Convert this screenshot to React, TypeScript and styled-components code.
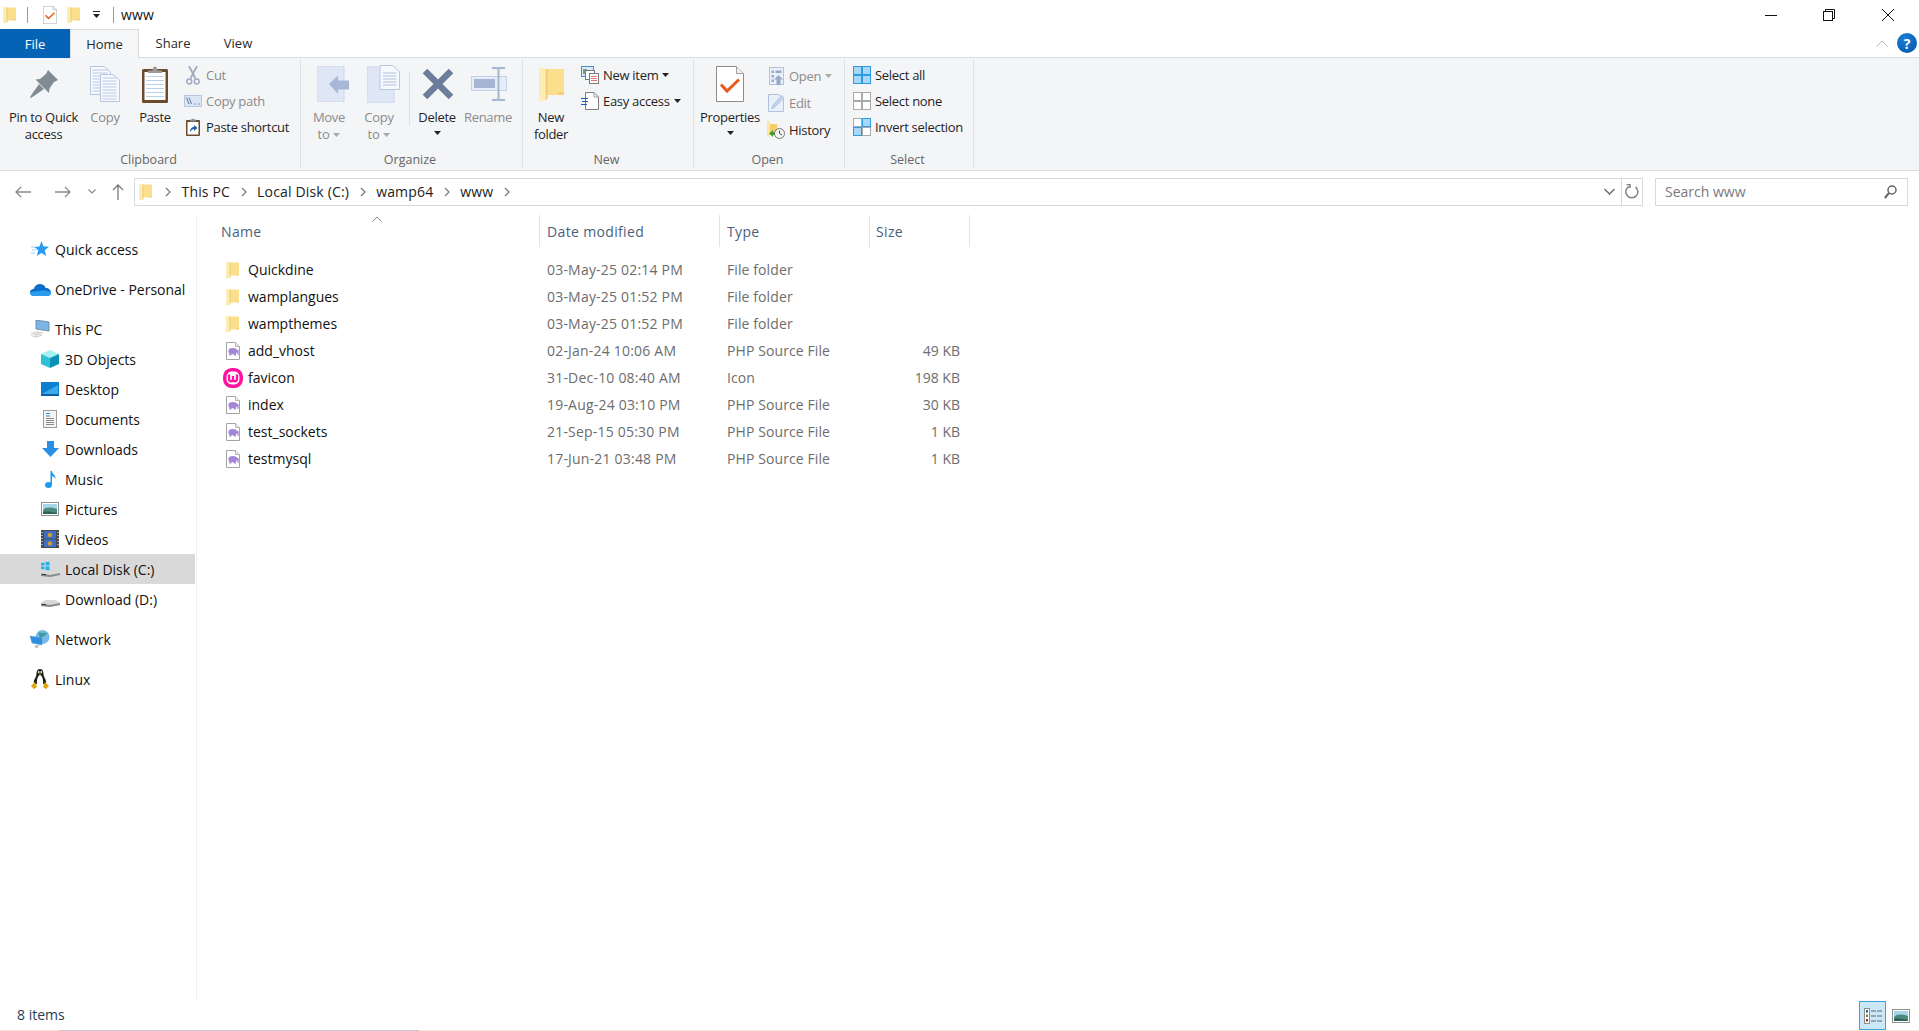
import React from "react";
import styled, { createGlobalStyle } from "styled-components";

const GlobalStyle = createGlobalStyle`
  html, body {
    margin: 0;
    padding: 0;
    height: 100%;
    background: #fff;
    overflow: hidden;
    font-family: "Open Sans", "Noto Sans", "Liberation Sans", sans-serif;
    font-size: 14px;
    color: #111;
  }
  #root { height: 100%; }
  svg { display: block; flex-shrink: 0; }
`;

/* ---------- drawings ---------- */

function FolderIcon({ w = 13, h = 18 }: { w?: number; h?: number }) {
  return (
    <svg width={w} height={h} viewBox="0 0 13 18" preserveAspectRatio="none">
      <path d="M3 1.5H13V13H9.5V14.5H3Z" fill="#fbdf8d" />
      <path d="M0 .5L3.5 1.5V17L.6 17.8L0 16.5Z" fill="#fdedb4" />
      <path d="M3.5 1.5H4.5V16.4L3.5 17Z" fill="#f0cd74" />
      <path d="M4.500 14.500H9.500V13H13V14.500H4.500Z" fill="#f5d27a" />
    </svg>
  );
}

function Elephant({ x, y }: { x: number; y: number }) {
  return (
    <g transform={`translate(${x} ${y}) scale(1.15)`} fill="#a586d6">
      <ellipse cx="4.5" cy="2.8" rx="3.8" ry="2.7" />
      <rect x="1.5" y="3.5" width="1.8" height="3" />
      <rect x="5.4" y="3.5" width="1.8" height="3" />
      <path d="M7 1L9.6 2V5.8H8.4V3.4L6.6 3Z" />
    </g>
  );
}

function PhpIcon() {
  return (
    <svg width="14" height="18" viewBox="0 0 14 18">
      <path d="M.5.5H9.5L13.5 4.5V17.5H.5Z" fill="#fff" stroke="#a3a3a3" />
      <path d="M9.5.5V4.5H13.5" fill="#eee" stroke="#b5b5b5" />
      <Elephant x={1.6} y={6} />
    </svg>
  );
}

function WampIcon() {
  return (
    <svg width="20" height="20" viewBox="0 0 20 20">
      <rect x="1.8" y="1.8" width="16.4" height="16.4" rx="6.8" fill="#fff" stroke="#ff12a0" strokeWidth="3.5" />
      <path d="M6 6.500V10.500C6 12.500 7 13.300 8 13.300C9.200 13.300 10 12.300 10 11V8M10 11C10 12.300 10.800 13.300 12 13.300C13 13.300 14 12.500 14 10.500V6.500" fill="none" stroke="#ff12a0" strokeWidth="2.3" />
    </svg>
  );
}

function PropertiesIcon({ w = 28, h = 36 }: { w?: number; h?: number }) {
  return (
    <svg width={w} height={h} viewBox="0 0 28 36">
      <path d="M.5.5H20.5L27.5 7.5V35.5H.5Z" fill="#fff" stroke="#8d8d8d" />
      <path d="M20.5.5V7.5H27.5" fill="#f1f1f1" stroke="#9e9e9e" />
      <path d="M5 18.5L11 25L23 13.5" fill="none" stroke="#ea5a1c" strokeWidth="3" />
    </svg>
  );
}

function PinIcon() {
  return (
    <svg width="30" height="30" viewBox="0 0 30 30">
      <path d="M19 1L29 11L25 13L20.5 19.5L20 24L6.5 10.5L11 10L17 5Z" fill="#808c93" />
      <path d="M10 15L15 20L2 29L1 28Z" fill="#808c93" />
    </svg>
  );
}

function DocLines({ x, y, w, h }: { x: number; y: number; w: number; h: number }) {
  const lines = [];
  for (let ly = y + 4; ly < y + h - 1; ly += 3) lines.push(`M${x + 2.5} ${ly}H${x + w - 2.5}`);
  return (
    <g>
      <path d={`M${x}.5 ${y}.5H${x + w - 6}L${x + w}.5 ${y + 6}V${y + h}.5H${x}.5Z`} fill="#f6f9fe" stroke="#b6c6e0" />
      <path d={lines.join("")} stroke="#b9c9e2" fill="none" />
    </g>
  );
}

function CopyIcon() {
  return (
    <svg width="30" height="36" viewBox="0 0 30 36">
      <DocLines x={0} y={0} w={20} h={28} />
      <DocLines x={10} y={8} w={19} h={27} />
    </svg>
  );
}

function ClipboardIcon() {
  return (
    <svg width="26" height="37" viewBox="0 0 26 37">
      <rect x="0" y="3" width="26" height="34" rx="1.5" fill="#6c4a2c" />
      <rect x="2.5" y="6" width="21" height="28" fill="#fff" />
      <path d="M4 10.5H22M4 14.5H22M4 18.5H22M4 22.5H22M4 26.5H22M4 30.5H22" stroke="#b6d3ee" />
      <path d="M6 7V4.5H10.5C11 2 11.5 .5 13 .5C14.5 .5 15 2 15.5 4.5H20V7Z" fill="#9a9a9a" />
    </svg>
  );
}

function CutIcon() {
  return (
    <svg width="14" height="19" viewBox="0 0 14 19" fill="none" stroke="#9facc2">
      <path d="M3 0L9.5 12.5M11 0L4.5 12.5" strokeWidth="1.8" />
      <circle cx="3.2" cy="15.5" r="2.5" strokeWidth="1.5" />
      <circle cx="10.8" cy="15.5" r="2.5" strokeWidth="1.5" />
    </svg>
  );
}

function CopyPathIcon() {
  return (
    <svg width="18" height="12" viewBox="0 0 18 12">
      <rect x=".5" y=".5" width="17" height="11" fill="#dbe5f6" stroke="#b6c7e2" />
      <path d="M2.5 2.5L5 9M5 2.5L7.5 9" stroke="#65748f" fill="none" />
      <path d="M10 9H11M12.5 9H13.5M15 9H16" stroke="#65748f" />
    </svg>
  );
}

function PasteShortcutIcon() {
  return (
    <svg width="14" height="18" viewBox="0 0 14 18">
      <rect y="2" width="14" height="16" rx="1" fill="#6c4a2c" />
      <rect x="1.5" y="4" width="11" height="12.5" fill="#fff" />
      <path d="M4 3.5V1.5H6C6.2 .5 7.8 .5 8 1.5H10V3.5Z" fill="#888" />
      <path d="M4 14C4 10.5 6 9 8 9V7L11.5 10L8 13V11C6.5 11 5.5 12 4 14Z" fill="#1f5fa8" />
    </svg>
  );
}

function MoveToIcon() {
  return (
    <svg width="33" height="36" viewBox="0 0 33 36">
      <path d="M0 0H27V36H0Z" fill="#dfe7f6" stroke="#c9d7ee" />
      <path d="M12 18L21 9.5V14.5H32V23.5H21V28Z" fill="#a6b8d6" />
    </svg>
  );
}

function CopyToIcon() {
  return (
    <svg width="33" height="38" viewBox="0 0 33 38">
      <path d="M0 2H27V38H0Z" fill="#dfe7f6" stroke="#c9d7ee" />
      <path d="M13 .5H26L32.5 7V24.5H13Z" fill="#f6f9fe" stroke="#b6c6e0" />
      <path d="M16 8H29.5M16 11H29.5M16 14H29.5M16 17H29.5M16 20H29.5" stroke="#aebfd9" />
    </svg>
  );
}

function DeleteIcon() {
  return (
    <svg width="32" height="32" viewBox="0 0 32 32">
      <path d="M3 3L29 29M29 3L3 29" stroke="#6c7d9c" strokeWidth="6.5" />
    </svg>
  );
}

function RenameIcon() {
  return (
    <svg width="36" height="34" viewBox="0 0 36 34">
      <rect x=".5" y="9.5" width="35" height="14" fill="#e6edf9" stroke="#c2d1e9" />
      <rect x="3" y="12" width="21" height="9" fill="#a5b6d3" />
      <path d="M21 1H26.5C27 1 27.5 2 27.5 3V31C27.5 32 27 33 26.5 33H21M34 1H28.5C28 1 27.5 2 27.5 3V31C27.5 32 28 33 28.5 33H34" fill="none" stroke="#a5b6d3" strokeWidth="2" />
    </svg>
  );
}

function NewItemIcon() {
  return (
    <svg width="18" height="18" viewBox="0 0 18 18">
      <rect x=".5" y=".5" width="12" height="10" fill="#dcebfa" stroke="#4d8cc9" />
      <rect x="2" y="3" width="4" height="5" fill="#7aa07a" />
      <rect x="4.5" y="4.5" width="9" height="9" fill="#fff" stroke="#7a7a7a" />
      <rect x="8.5" y="7.5" width="9" height="10" fill="#fff" stroke="#7a7a7a" />
      <path d="M10 10.5H16M10 12.5H16M10 14.5H16" stroke="#d77" />
    </svg>
  );
}

function EasyAccessIcon() {
  return (
    <svg width="18" height="18" viewBox="0 0 18 18">
      <path d="M4.5.5H13L17.5 5V17.5H4.5Z" fill="#fff" stroke="#7d7d7d" />
      <path d="M13 .5V5H17.5" fill="none" stroke="#a0a0a0" />
      <path d="M0 6.5H7M1 9.5H7M0 12.5H6" stroke="#1f5fa8" />
    </svg>
  );
}

function OpenIcon() {
  return (
    <svg width="15" height="18" viewBox="0 0 15 18">
      <rect x=".5" y=".5" width="14" height="17" fill="#eaf0fa" stroke="#b2c2dc" />
      <path d="M2.5 3.5H5V6H2.5ZM6.5 3.5H12.5V6H6.5ZM2.5 8H5V10.5H2.5ZM2.5 12.5H5V15H2.5Z" fill="#96a9c8" />
      <path d="M9.5 8L14 12.5H11.5V18H7.5V12.5H5Z" fill="#96a9c8" />
    </svg>
  );
}

function EditIcon() {
  return (
    <svg width="17" height="18" viewBox="0 0 17 18">
      <path d="M.5.5H11L15.5 5V17.5H.5Z" fill="#eaf0fa" stroke="#b2c2dc" />
      <path d="M3.5 15L5 11L13.5 1.5L16 3.5L7 13Z" fill="#c4d4ec" stroke="#a5b8d6" strokeWidth=".7" />
    </svg>
  );
}

function HistoryIcon() {
  return (
    <svg width="18" height="18" viewBox="0 0 18 18">
      <path d="M0 0L3 1V3H10V14H3L.5 16Z" fill="#f4cd6a" />
      <path d="M0 0L3 1V14L.5 16Z" fill="#fde7a2" />
      <path d="M2 12.5L6 9V11H9V14H6V16Z" fill="#35a32a" />
      <circle cx="12.5" cy="12.5" r="5" fill="#f4f4f4" stroke="#777" />
      <path d="M12.5 9.5V12.5L15 14" stroke="#555" fill="none" />
    </svg>
  );
}

function SelectIcon({ filled }: { filled: number[] }) {
  const cells = [
    [0, 0],
    [9, 0],
    [0, 9],
    [9, 9],
  ];
  return (
    <svg width="18" height="18" viewBox="0 0 18 18">
      {cells.map(([x, y], i) => {
        const on = filled.includes(i);
        return (
          <rect
            key={i}
            x={x + 0.5}
            y={y + 0.5}
            width="8"
            height="8"
            fill={on ? "#a8d8f8" : "#fff"}
            stroke={on ? "#2f9be3" : "#a9a9a9"}
          />
        );
      })}
    </svg>
  );
}

function Caret({ light }: { light?: boolean }) {
  return (
    <svg width="7" height="4" viewBox="0 0 7 4">
      <path d="M0 0H7L3.5 4Z" fill={light ? "#a9a9a9" : "#222"} />
    </svg>
  );
}

function Chevron() {
  return (
    <svg width="6" height="10" viewBox="0 0 6 10">
      <path d="M1 1L5 5L1 9" fill="none" stroke="#777" strokeWidth="1.2" />
    </svg>
  );
}

function StarIcon() {
  return (
    <svg width="18" height="16" viewBox="0 0 18 16">
      <path d="M10.5 0L12.5 5.3L18 5.8L13.8 9.3L15.2 15L10.5 12L5.8 15L7.2 9.3L3.5 6L8.5 5.5Z" fill="#2a9bee" />
      <path d="M0 6H4M1 9H5M0 12H4" stroke="#9cd0f5" />
    </svg>
  );
}

function CloudIcon() {
  return (
    <svg width="21" height="13" viewBox="0 0 20 13" preserveAspectRatio="none">
      <path d="M4 13C1 13 0 11 0 9.5C0 7.5 1.5 6 3.5 6C4.5 2.5 7 1 9.5 1C12 1 14 2.5 15 5C17.5 5 20 7 20 9.5C20 11.5 18.5 13 16.5 13Z" fill="#0a6fc9" />
      <path d="M0 9.5C0 11 1 13 4 13H16.5C18.5 13 20 11.5 20 9.5C17 7.5 13 7 9 8C5 8.5 2 8.5 0 9.5Z" fill="#2c9cef" />
    </svg>
  );
}

function MonitorIcon() {
  return (
    <svg width="20" height="18" viewBox="0 0 20 18">
      <path d="M6 0L19 2V11L6 9Z" fill="#7cb6e6" stroke="#5a7f9c" strokeWidth=".8" />
      <path d="M0 13L8 11L14 13L6 16Z" fill="#dcdcdc" />
      <path d="M1 15.5L6 17L12 15" stroke="#c9c9c9" fill="none" />
    </svg>
  );
}

function CubeIcon() {
  return (
    <svg width="18" height="18" viewBox="0 0 18 18">
      <path d="M9 0L18 4L9 8L0 4Z" fill="#a6f0ef" />
      <path d="M0 4L9 8V18L0 14Z" fill="#2cc1d6" />
      <path d="M18 4L9 8V18L18 14Z" fill="#0b91b6" />
    </svg>
  );
}

function DesktopIcon() {
  return (
    <svg width="18" height="14" viewBox="0 0 18 14">
      <rect width="18" height="14" fill="#0b7fd0" />
      <path d="M1 12L17 3V12Z" fill="#3ea8ec" />
      <rect x="0" y="12" width="18" height="2" fill="#0a5fa6" />
    </svg>
  );
}

function DocumentsIcon() {
  return (
    <svg width="14" height="18" viewBox="0 0 14 18">
      <rect x=".5" y=".5" width="13" height="17" fill="#f4f4f4" stroke="#9d9d9d" />
      <path d="M3 3.5H7M3 6H7" stroke="#2c86d0" />
      <path d="M3 8.5H11M3 10.5H11M3 12.5H11M3 14.5H11" stroke="#8b8b8b" />
    </svg>
  );
}

function DownloadsIcon() {
  return (
    <svg width="17" height="16" viewBox="0 0 17 16">
      <path d="M5 0H12V7H17L8.5 16L0 7H5Z" fill="#2b8fe6" />
    </svg>
  );
}

function MusicIcon() {
  return (
    <svg width="11" height="17" viewBox="0 0 11 17">
      <ellipse cx="3.5" cy="14" rx="3.5" ry="3" fill="#1d9bf0" />
      <path d="M5.5 0H7C7.2 3 11 4 10.5 8C9.5 6 8.5 5.5 7 5.5V14H5.5Z" fill="#1d9bf0" />
    </svg>
  );
}

function PicturesIcon() {
  return (
    <svg width="18" height="14" viewBox="0 0 18 14">
      <rect x=".5" y=".5" width="17" height="13" fill="#fff" stroke="#8f8f8f" />
      <rect x="2" y="2" width="14" height="10" fill="#a8d4ea" />
      <path d="M2 8C5 5 9 5 16 7V12H2Z" fill="#4c8a7c" />
      <path d="M2 10C6 9 10 10 16 11V12H2Z" fill="#2e5f5a" />
    </svg>
  );
}

function VideosIcon() {
  return (
    <svg width="18" height="18" viewBox="0 0 18 18">
      <rect width="18" height="18" fill="#4a4a4a" />
      <path d="M1 2V3M1 5V6M1 8V9M1 11V12M1 14V15M17 2V3M17 5V6M17 8V9M17 11V12M17 14V15" stroke="#ddd" strokeWidth="1.2" />
      <rect x="3" y="1" width="12" height="7.5" fill="#3f6fc4" />
      <rect x="3" y="9.5" width="12" height="7.5" fill="#3f6fc4" />
      <circle cx="9" cy="5" r="2.2" fill="#d69a2a" />
      <circle cx="9" cy="13.5" r="2.2" fill="#d69a2a" />
    </svg>
  );
}

function DiskIcon({ windows }: { windows?: boolean }) {
  return (
    <svg width="19" height="16" viewBox="0 0 19 16">
      <path d="M0 12L4 9H15L19 12V14L9 16L0 15Z" fill="#d8d8d8" />
      <path d="M0 12.5L9 14L19 12V14L9 16L0 15Z" fill="#8a8a8a" />
      <path d="M1 13.5H5" stroke="#333" />
      {windows && <path d="M0 2L3.5 1.5V4.5H0ZM4.5 1.3L8.5 .5V4.5H4.5ZM0 5.5H3.5V8.5L0 8ZM4.5 5.5H8.5V9.5L4.5 8.7Z" fill="#22b0ee" />}
    </svg>
  );
}

function NetworkIcon() {
  return (
    <svg width="20" height="18" viewBox="0 0 20 18">
      <circle cx="12.5" cy="7" r="7" fill="#79b9e6" />
      <path d="M9 2C12 4 15 2 17 3C16 6 13 5 12 8C10 8 8 5 9 2Z" fill="#3f9a9a" />
      <path d="M0 6L12 8V15L2 13Z" fill="#2e8fdc" stroke="#5a9ecf" strokeWidth=".5" />
      <path d="M5 15H9L8 18H5Z" fill="#c4c4c4" />
    </svg>
  );
}

function TuxIcon() {
  return (
    <svg width="18" height="21" viewBox="0 0 18 21">
      <path d="M9 0C12 0 12.5 3 12.5 5C12.5 8 16 11 15 15H3C2 11 5.5 8 5.5 5C5.5 3 6 0 9 0Z" fill="#1d1d1d" />
      <path d="M9 6C11.5 7 12.5 11 12 15.5H6C5.5 11 6.5 7 9 6Z" fill="#fff" />
      <circle cx="7.7" cy="3" r=".9" fill="#fff" />
      <circle cx="10.3" cy="3" r=".9" fill="#fff" />
      <path d="M7.5 4.5H10.5L9 6Z" fill="#e0a30e" />
      <path d="M0 17L4 13L6 18L3 20ZM18 17L14 13L12 18L15 20Z" fill="#e0a30e" />
    </svg>
  );
}

function DetailsViewIcon() {
  return (
    <svg width="18" height="16" viewBox="0 0 18 16">
      <rect x=".5" y=".5" width="5" height="15" fill="#fff" stroke="#8f8f8f" />
      <rect x="2" y="2" width="2" height="2.5" fill="#35608f" />
      <rect x="2" y="6.5" width="2" height="2.5" fill="#9a7b22" />
      <rect x="2" y="11" width="2" height="2.5" fill="#a8321e" />
      <path d="M7 3H12M13 3H18M7 8H12M13 8H18M7 13H12M13 13H18" stroke="#666" />
    </svg>
  );
}

/* ---------- window chrome ---------- */

const Page = styled.div`
  height: 100vh;
  display: flex;
  flex-direction: column;
  overflow: hidden;
`;

const Spacer = styled.div<{ $w: number }>`
  width: ${(p) => p.$w}px;
  flex-shrink: 0;
`;

const TitleBar = styled.div`
  height: 29px;
  display: flex;
  align-items: center;
  padding-left: 3px;
`;

const TitleSep = styled.div<{ $right: number }>`
  width: 1px;
  height: 16px;
  background: #9a9a9a;
  margin: 0 ${(p) => p.$right}px 0 11px;
`;

const QuickDown = styled.div`
  width: 9px;
  margin: 0 1px 0 12px;
  display: flex;
  flex-direction: column;
  align-items: center;
  gap: 2px;
  &::before {
    content: "";
    width: 7px;
    height: 1px;
    background: #222;
  }
`;

const TitleText = styled.span`
  font-size: 14px;
  letter-spacing: 0.2px;
  color: #111;
`;

const WindowButtons = styled.div`
  margin-left: auto;
  display: flex;
  align-items: center;
  gap: 46px;
  padding-right: 25px;
`;

const MaxButton = styled.div`
  margin-right: 1px;
`;

const TabRow = styled.div`
  height: 29px;
  box-sizing: border-box;
  display: flex;
  align-items: stretch;
  border-bottom: 1px solid #dadbdc;
`;

const FileTab = styled.div`
  width: 70px;
  margin-bottom: -1px;
  background: #0563b5;
  color: #fff;
  font-size: 13px;
  display: flex;
  align-items: center;
  justify-content: center;
`;

const Tab = styled.div<{ $w: number; $active?: boolean }>`
  width: ${(p) => p.$w}px;
  box-sizing: border-box;
  font-size: 13px;
  color: #2b2b2b;
  display: flex;
  align-items: center;
  justify-content: center;
  margin-bottom: ${(p) => (p.$active ? "-1px" : "0")};
  background: ${(p) => (p.$active ? "#f5f6f7" : "transparent")};
  border: ${(p) => (p.$active ? "1px solid #dadbdc" : "none")};
  border-bottom: none;
`;

const TabRight = styled.div`
  margin-left: auto;
  display: flex;
  align-items: center;
  gap: 9px;
  padding-right: 2px;
`;

const HelpBall = styled.div`
  width: 20px;
  height: 20px;
  border-radius: 50%;
  background: radial-gradient(circle at 40% 30%, #1b7fd8, #0054a6);
  color: #fff;
  font-size: 14px;
  font-weight: 700;
  display: flex;
  align-items: center;
  justify-content: center;
`;

/* ---------- ribbon ---------- */

const Ribbon = styled.div`
  height: 113px;
  box-sizing: border-box;
  display: flex;
  padding: 2px 0;
  background: #f4f5f7;
  border-bottom: 1px solid #dadbdc;
`;

const Group = styled.div<{ $w: number; $pad: number }>`
  width: ${(p) => p.$w}px;
  box-sizing: border-box;
  display: flex;
  flex-direction: column;
  border-right: 1px solid #dfe0e2;
  padding-left: ${(p) => p.$pad}px;
`;

const GroupBody = styled.div`
  flex: 1;
  display: flex;
  align-items: flex-start;
  padding-top: 2px;
  letter-spacing: -0.3px;
`;

const GroupLabel = styled.div<{ $pad: number }>`
  height: 17px;
  line-height: 17px;
  text-align: center;
  font-size: 12.5px;
  color: #666;
  margin-left: ${(p) => -p.$pad}px;
  padding-right: 3px;
`;

const BigButton = styled.div<{ $w: number; $off?: boolean }>`
  width: ${(p) => p.$w}px;
  display: flex;
  flex-direction: column;
  align-items: center;
  font-size: 13px;
  line-height: 17px;
  text-align: center;
  color: ${(p) => (p.$off ? "#8b8b8b" : "#1f1f1f")};
`;

const BigIcon = styled.div<{ $shift?: number }>`
  height: 38px;
  margin: 3px 0 6px ${(p) => p.$shift ?? 0}px;
  display: flex;
  align-items: center;
  justify-content: center;
`;

const CaretLine = styled.div`
  display: flex;
  align-items: center;
  justify-content: center;
  gap: 4px;
`;

const CaretOnly = styled.div`
  height: 14px;
  display: flex;
  align-items: center;
`;

const GroupDivider = styled.div`
  width: 1px;
  height: 55px;
  margin: 9px 2px 0 5px;
  background: #dfe0e2;
`;

const SmallColumn = styled.div<{ $left: number; $row: number }>`
  margin-left: ${(p) => p.$left}px;
  display: grid;
  grid-auto-rows: ${(p) => p.$row}px;
`;

const SmallButton = styled.div<{ $off?: boolean }>`
  display: flex;
  align-items: center;
  gap: 4px;
  font-size: 13px;
  white-space: nowrap;
  color: ${(p) => (p.$off ? "#8b8b8b" : "#1f1f1f")};
`;

const SmallIcon = styled.div`
  width: 18px;
  display: flex;
  justify-content: center;
`;

/* ---------- address bar ---------- */

const AddressRow = styled.div`
  height: 38px;
  box-sizing: border-box;
  display: flex;
  align-items: center;
  padding-top: 3px;
`;

const NavButtons = styled.div`
  width: 134px;
  display: flex;
  align-items: center;
  padding-left: 15px;
  box-sizing: border-box;
`;

const AddressBox = styled.div`
  width: 1509px;
  height: 28px;
  box-sizing: border-box;
  border: 1px solid #d9d9d9;
  display: flex;
  align-items: center;
  padding-left: 4px;
  font-size: 14px;
  letter-spacing: 0.17px;
  color: #222;
`;

const Crumb = styled.span`
  margin: 0 10.5px;
`;

const AddressRight = styled.div`
  margin-left: auto;
  height: 100%;
  display: flex;
  align-items: center;
`;

const RefreshCell = styled.div`
  width: 20px;
  height: 100%;
  border-left: 1px solid #d9d9d9;
  margin-left: 6px;
  display: flex;
  align-items: center;
  justify-content: center;
`;

const SearchBox = styled.div`
  width: 253px;
  height: 28px;
  margin-left: 12px;
  box-sizing: border-box;
  border: 1px solid #d9d9d9;
  display: flex;
  align-items: center;
  justify-content: space-between;
  padding: 0 10px 0 9px;
  font-size: 14px;
  color: #7a7a7a;
`;

/* ---------- main area ---------- */

const Main = styled.div`
  flex: 1;
  min-height: 0;
  display: flex;
  padding-top: 6px;
`;

const Sidebar = styled.nav`
  width: 197px;
  box-sizing: border-box;
  padding-top: 19px;
  border-right: 1px solid #f0f0f0;
`;

const TreeGroup = styled.div`
  margin-bottom: 10px;
`;

const TreeRow = styled.div<{ $child?: boolean; $on?: boolean }>`
  width: 195px;
  height: 30px;
  display: flex;
  align-items: center;
  font-size: 14px;
  color: #111;
  padding-left: ${(p) => (p.$child ? 40 : 30)}px;
  box-sizing: border-box;
  background: ${(p) => (p.$on ? "#d9d9d9" : "transparent")};
`;

const TreeIcon = styled.div`
  width: 20px;
  margin-right: 5px;
  display: flex;
  justify-content: center;
`;

const FilePane = styled.section`
  flex: 1;
  padding-left: 20px;
`;

const HeaderRow = styled.div`
  position: relative;
  display: grid;
  grid-template-columns: 323px 180px 150px 100px;
  width: 753px;
  height: 32px;
  margin-bottom: 9px;
`;

const HeaderCell = styled.div<{ $left: number }>`
  border-right: 1px solid #e3e3e3;
  padding-left: ${(p) => p.$left}px;
  display: flex;
  align-items: center;
  font-size: 14px;
  letter-spacing: 0.35px;
  color: #4c607a;
`;

const SortArrow = styled.div`
  position: absolute;
  left: 155px;
  top: 1px;
`;

const FileRow = styled.div`
  display: grid;
  grid-template-columns: 323px 180px 150px 100px;
  width: 753px;
  height: 27px;
  align-items: center;
  font-size: 14px;
  color: #6d6d6d;
`;

const NameCell = styled.div`
  display: flex;
  align-items: center;
  color: #111;
`;

const FileIconSlot = styled.div`
  width: 31px;
  display: flex;
  justify-content: center;
`;

const DateCell = styled.div`
  padding-left: 7px;
  letter-spacing: 0.2px;
`;

const TypeCell = styled.div`
  padding-left: 7px;
  letter-spacing: 0.1px;
`;

const SizeCell = styled.div`
  text-align: right;
  padding-right: 10px;
`;

/* ---------- status bar ---------- */

const StatusBar = styled.footer`
  height: 30px;
  box-sizing: border-box;
  display: flex;
  align-items: center;
  padding: 0 0 2px 17px;
  font-size: 14px;
  color: #2a3b55;
  border-bottom: 1px solid transparent;
  border-image: linear-gradient(
      to right,
      #f4dfd0 60px,
      #c9c9c9 60px,
      #c9c9c9 420px,
      #f5e9d3 420px
    )
    1;
`;

const ViewButtons = styled.div`
  margin: 2px 0 0 auto;
  display: flex;
  align-items: center;
  gap: 6px;
  padding-right: 9px;
`;

const ViewButton = styled.div`
  width: 27px;
  height: 29px;
  box-sizing: border-box;
  background: #cbe8f8;
  border: 1px solid #3ea3d8;
  display: flex;
  align-items: center;
  justify-content: center;
`;

const files = [
  { name: "Quickdine", date: "03-May-25 02:14 PM", type: "File folder", size: "", icon: "folder" },
  { name: "wamplangues", date: "03-May-25 01:52 PM", type: "File folder", size: "", icon: "folder" },
  { name: "wampthemes", date: "03-May-25 01:52 PM", type: "File folder", size: "", icon: "folder" },
  { name: "add_vhost", date: "02-Jan-24 10:06 AM", type: "PHP Source File", size: "49 KB", icon: "php" },
  { name: "favicon", date: "31-Dec-10 08:40 AM", type: "Icon", size: "198 KB", icon: "wamp" },
  { name: "index", date: "19-Aug-24 03:10 PM", type: "PHP Source File", size: "30 KB", icon: "php" },
  { name: "test_sockets", date: "21-Sep-15 05:30 PM", type: "PHP Source File", size: "1 KB", icon: "php" },
  { name: "testmysql", date: "17-Jun-21 03:48 PM", type: "PHP Source File", size: "1 KB", icon: "php" },
];

const fileIcons: Record<string, React.ReactNode> = {
  folder: <FolderIcon />,
  php: <PhpIcon />,
  wamp: <WampIcon />,
};

const pcChildren: [string, React.ReactNode][] = [
  ["3D Objects", <CubeIcon />],
  ["Desktop", <DesktopIcon />],
  ["Documents", <DocumentsIcon />],
  ["Downloads", <DownloadsIcon />],
  ["Music", <MusicIcon />],
  ["Pictures", <PicturesIcon />],
  ["Videos", <VideosIcon />],
  ["Local Disk (C:)", <DiskIcon windows />],
  ["Download (D:)", <DiskIcon />],
];

export default function App() {
  return (
    <Page>
      <GlobalStyle />
      <TitleBar>
        <FolderIcon />
        <TitleSep $right={15} />
        <PropertiesIcon w={14} h={18} />
        <Spacer $w={10} />
        <FolderIcon />
        <QuickDown>
          <Caret />
        </QuickDown>
        <TitleSep $right={7} />
        <TitleText>www</TitleText>
        <WindowButtons>
          <svg width="12" height="12" viewBox="0 0 12 12">
            <path d="M0 6.5H12" stroke="#111" />
          </svg>
          <MaxButton>
            <svg width="12" height="12" viewBox="0 0 12 12" fill="none" stroke="#111">
              <rect x=".5" y="2.5" width="9" height="9" />
              <path d="M2.5 2.5V.5H11.5V9.5H9.5" />
            </svg>
          </MaxButton>
          <svg width="12" height="12" viewBox="0 0 12 12" fill="none" stroke="#111">
            <path d="M0 0L12 12M12 0L0 12" />
          </svg>
        </WindowButtons>
      </TitleBar>

      <TabRow>
        <FileTab>File</FileTab>
        <Tab $w={69} $active>
          Home
        </Tab>
        <Tab $w={68}>Share</Tab>
        <Tab $w={62}>View</Tab>
        <TabRight>
          <svg width="12" height="7" viewBox="0 0 12 7">
            <path d="M.5 6.5L6 1L11.5 6.5" fill="none" stroke="#b4b4b4" />
          </svg>
          <HelpBall>?</HelpBall>
        </TabRight>
      </TabRow>

      <Ribbon>
        <Group $w={301} $pad={5}>
          <GroupBody>
            <BigButton $w={77}>
              <BigIcon>
                <PinIcon />
              </BigIcon>
              Pin to Quick
              <br />
              access
            </BigButton>
            <BigButton $w={46} $off>
              <BigIcon>
                <CopyIcon />
              </BigIcon>
              Copy
            </BigButton>
            <BigButton $w={54}>
              <BigIcon>
                <ClipboardIcon />
              </BigIcon>
              Paste
            </BigButton>
            <SmallColumn $left={2} $row={26}>
              <SmallButton $off>
                <SmallIcon>
                  <CutIcon />
                </SmallIcon>
                Cut
              </SmallButton>
              <SmallButton $off>
                <SmallIcon>
                  <CopyPathIcon />
                </SmallIcon>
                Copy path
              </SmallButton>
              <SmallButton>
                <SmallIcon>
                  <PasteShortcutIcon />
                </SmallIcon>
                Paste shortcut
              </SmallButton>
            </SmallColumn>
          </GroupBody>
          <GroupLabel $pad={5}>Clipboard</GroupLabel>
        </Group>

        <Group $w={222} $pad={3}>
          <GroupBody>
            <BigButton $w={50} $off>
              <BigIcon $shift={8}>
                <MoveToIcon />
              </BigIcon>
              Move
              <CaretLine>
                to <Caret light />
              </CaretLine>
            </BigButton>
            <BigButton $w={50} $off>
              <BigIcon $shift={8}>
                <CopyToIcon />
              </BigIcon>
              Copy
              <CaretLine>
                to <Caret light />
              </CaretLine>
            </BigButton>
            <GroupDivider />
            <BigButton $w={50}>
              <BigIcon $shift={1}>
                <DeleteIcon />
              </BigIcon>
              Delete
              <CaretOnly>
                <Caret />
              </CaretOnly>
            </BigButton>
            <BigButton $w={52} $off>
              <BigIcon $shift={1}>
                <RenameIcon />
              </BigIcon>
              Rename
            </BigButton>
          </GroupBody>
          <GroupLabel $pad={3}>Organize</GroupLabel>
        </Group>

        <Group $w={171} $pad={3}>
          <GroupBody>
            <BigButton $w={50}>
              <BigIcon>
                <FolderIcon w={25} h={36} />
              </BigIcon>
              New
              <br />
              folder
            </BigButton>
            <SmallColumn $left={5} $row={26}>
              <SmallButton>
                <SmallIcon>
                  <NewItemIcon />
                </SmallIcon>
                New item <Caret />
              </SmallButton>
              <SmallButton>
                <SmallIcon>
                  <EasyAccessIcon />
                </SmallIcon>
                Easy access <Caret />
              </SmallButton>
            </SmallColumn>
          </GroupBody>
          <GroupLabel $pad={3}>New</GroupLabel>
        </Group>

        <Group $w={151} $pad={4}>
          <GroupBody>
            <BigButton $w={64}>
              <BigIcon>
                <PropertiesIcon />
              </BigIcon>
              Properties
              <CaretOnly>
                <Caret />
              </CaretOnly>
            </BigButton>
            <SmallColumn $left={5} $row={27}>
              <SmallButton $off>
                <SmallIcon>
                  <OpenIcon />
                </SmallIcon>
                Open <Caret light />
              </SmallButton>
              <SmallButton $off>
                <SmallIcon>
                  <EditIcon />
                </SmallIcon>
                Edit
              </SmallButton>
              <SmallButton>
                <SmallIcon>
                  <HistoryIcon />
                </SmallIcon>
                History
              </SmallButton>
            </SmallColumn>
          </GroupBody>
          <GroupLabel $pad={4}>Open</GroupLabel>
        </Group>

        <Group $w={129} $pad={8}>
          <GroupBody>
            <SmallColumn $left={0} $row={26}>
              <SmallButton>
                <SmallIcon>
                  <SelectIcon filled={[0, 1, 2, 3]} />
                </SmallIcon>
                Select all
              </SmallButton>
              <SmallButton>
                <SmallIcon>
                  <SelectIcon filled={[]} />
                </SmallIcon>
                Select none
              </SmallButton>
              <SmallButton>
                <SmallIcon>
                  <SelectIcon filled={[1, 2]} />
                </SmallIcon>
                Invert selection
              </SmallButton>
            </SmallColumn>
          </GroupBody>
          <GroupLabel $pad={8}>Select</GroupLabel>
        </Group>
      </Ribbon>

      <AddressRow>
        <NavButtons>
          <svg width="16" height="12" viewBox="0 0 16 12" fill="none" stroke="#8a8a8a" strokeWidth="1.3">
            <path d="M16 6H1M6 1L1 6L6 11" />
          </svg>
          <Spacer $w={24} />
          <svg width="16" height="12" viewBox="0 0 16 12" fill="none" stroke="#8a8a8a" strokeWidth="1.3">
            <path d="M0 6H15M10 1L15 6L10 11" />
          </svg>
          <Spacer $w={17} />
          <svg width="8" height="5" viewBox="0 0 8 5" fill="none" stroke="#8a8a8a" strokeWidth="1.2">
            <path d="M.5 .5L4 4L7.5 .5" />
          </svg>
          <Spacer $w={16} />
          <svg width="12" height="16" viewBox="0 0 12 16" fill="none" stroke="#7a7a7a" strokeWidth="1.3">
            <path d="M6 16V1M1 6L6 1L11 6" />
          </svg>
        </NavButtons>
        <AddressBox>
          <FolderIcon />
          <Spacer $w={13} />
          <Chevron />
          <Crumb>This PC</Crumb>
          <Chevron />
          <Crumb>Local Disk (C:)</Crumb>
          <Chevron />
          <Crumb>wamp64</Crumb>
          <Chevron />
          <Crumb>www</Crumb>
          <Chevron />
          <AddressRight>
            <svg width="11" height="7" viewBox="0 0 11 7" fill="none" stroke="#666" strokeWidth="1.3">
              <path d="M.5 1L5.5 6L10.5 1" />
            </svg>
            <RefreshCell>
              <svg width="14" height="15" viewBox="0 0 14 15" fill="none" stroke="#888" strokeWidth="1.6">
                <path d="M4.5 2.3A6 6 0 1 0 10.5 3" />
                <path d="M1.5 .5H5V4" />
              </svg>
            </RefreshCell>
          </AddressRight>
        </AddressBox>
        <SearchBox>
          Search www
          <svg width="13" height="14" viewBox="0 0 13 14" fill="none" stroke="#666" strokeWidth="1.5">
            <circle cx="8" cy="5" r="4" />
            <path d="M5 8L.8 13" strokeWidth="2" />
          </svg>
        </SearchBox>
      </AddressRow>

      <Main>
        <Sidebar>
          <TreeGroup>
            <TreeRow>
              <TreeIcon>
                <StarIcon />
              </TreeIcon>
              Quick access
            </TreeRow>
          </TreeGroup>
          <TreeGroup>
            <TreeRow>
              <TreeIcon>
                <CloudIcon />
              </TreeIcon>
              OneDrive - Personal
            </TreeRow>
          </TreeGroup>
          <TreeGroup>
            <TreeRow>
              <TreeIcon>
                <MonitorIcon />
              </TreeIcon>
              This PC
            </TreeRow>
            {pcChildren.map(([label, icon]) => (
              <TreeRow key={label} $child $on={label === "Local Disk (C:)"}>
                <TreeIcon>{icon}</TreeIcon>
                {label}
              </TreeRow>
            ))}
          </TreeGroup>
          <TreeGroup>
            <TreeRow>
              <TreeIcon>
                <NetworkIcon />
              </TreeIcon>
              Network
            </TreeRow>
          </TreeGroup>
          <TreeGroup>
            <TreeRow>
              <TreeIcon>
                <TuxIcon />
              </TreeIcon>
              Linux
            </TreeRow>
          </TreeGroup>
        </Sidebar>

        <FilePane>
          <HeaderRow>
            <HeaderCell $left={4}>Name</HeaderCell>
            <HeaderCell $left={7}>Date modified</HeaderCell>
            <HeaderCell $left={7}>Type</HeaderCell>
            <HeaderCell $left={6}>Size</HeaderCell>
            <SortArrow>
              <svg width="10" height="6" viewBox="0 0 10 6">
                <path d="M.5 5.5L5 1L9.5 5.5" fill="none" stroke="#8a8a8a" />
              </svg>
            </SortArrow>
          </HeaderRow>
          {files.map((f) => (
            <FileRow key={f.name}>
              <NameCell>
                <FileIconSlot>{fileIcons[f.icon]}</FileIconSlot>
                {f.name}
              </NameCell>
              <DateCell>{f.date}</DateCell>
              <TypeCell>{f.type}</TypeCell>
              <SizeCell>{f.size}</SizeCell>
            </FileRow>
          ))}
        </FilePane>
      </Main>

      <StatusBar>
        8 items
        <ViewButtons>
          <ViewButton>
            <DetailsViewIcon />
          </ViewButton>
          <PicturesIcon />
        </ViewButtons>
      </StatusBar>
    </Page>
  );
}
